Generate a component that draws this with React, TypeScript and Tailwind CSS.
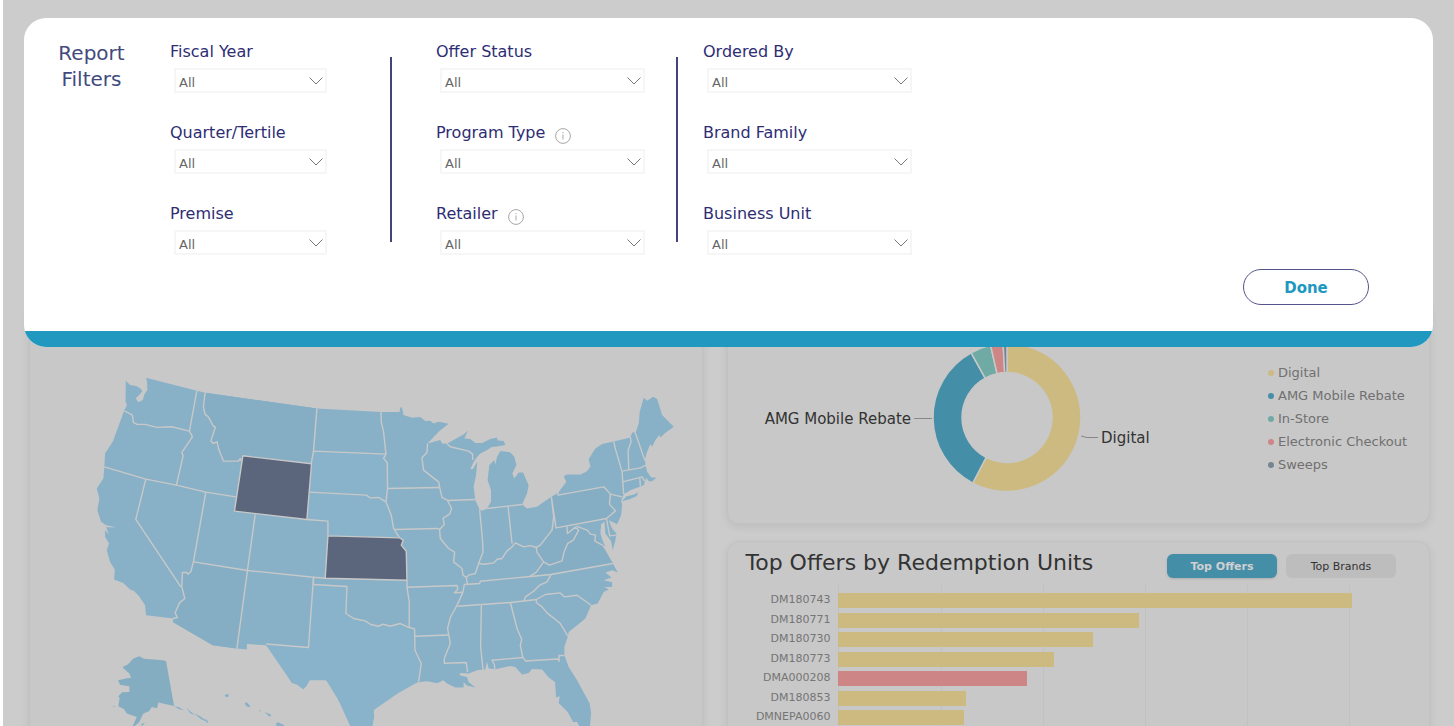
import { useState } from 'react';

type Filter = { id: string; label: string; info?: boolean };

const filterColumns: { filters: Filter[]; className: string }[] = [
  {
    className: 'w-[157px]',
    filters: [
      { id: 'fiscal-year', label: 'Fiscal Year' },
      { id: 'quarter', label: 'Quarter/Tertile' },
      { id: 'premise', label: 'Premise' },
    ],
  },
  {
    className: 'w-[209px]',
    filters: [
      { id: 'offer-status', label: 'Offer Status' },
      { id: 'program-type', label: 'Program Type', info: true },
      { id: 'retailer', label: 'Retailer', info: true },
    ],
  },
  {
    className: 'w-[209px]',
    filters: [
      { id: 'ordered-by', label: 'Ordered By' },
      { id: 'brand-family', label: 'Brand Family' },
      { id: 'business-unit', label: 'Business Unit' },
    ],
  },
];

const slices = [
  { name: 'Digital', color: '#cdba80', from: 0, to: 207.6 },
  { name: 'AMG Mobile Rebate', color: '#458ea8', from: 207.6, to: 331 },
  { name: 'In-Store', color: '#70aaa4', from: 331, to: 347.2 },
  { name: 'Electronic Checkout', color: '#cd8685', from: 347.2, to: 357 },
  { name: 'Sweeps', color: '#748591', from: 357, to: 360 },
];

// width is a percentage of the plot area
const offers = [
  { code: 'DM180743', width: 91.5, color: '#cdba80' },
  { code: 'DM180771', width: 53.6, color: '#cdba80' },
  { code: 'DM180730', width: 45.3, color: '#cdba80' },
  { code: 'DM180773', width: 38.3, color: '#cdba80' },
  { code: 'DMA000208', width: 33.5, color: '#cd8685' },
  { code: 'DM180853', width: 22.7, color: '#cdba80' },
  { code: 'DMNEPA0060', width: 22.3, color: '#cdba80' },
];

const gridLines = [0, 18.2, 36.4, 54.6, 72.8, 91];

const mainland =
  'M125.7 380.7L130 385L136 386L140 388.3L142.3 391L140 394L135.7 398.3L138.3 402.3L142.7 400L144.3 394.3L147.3 390L147 382L146 377.7L196.7 390.7L205 392.7L256.7 400L316.7 408.3L380.7 412L399.3 412L400 407.3L401.7 407.3L403.3 415L411.7 417.7L420 417L425 421L430 420.7L433.3 423.3L438.3 421.7L448.3 423.7L438.3 431.7L427.3 443.3L440 440L441.7 443.3L446.7 443.7L455 439L463.3 434.3L467.7 430.3L464 438.3L470 439L475 443L481.7 443L490 439L496.7 437.3L497.3 440.3L503.3 441L505 445L496.7 446.3L491.7 447L485 451L480 453.3L476.7 457L473.3 462L470 469L472.7 469L477 461.7L475.7 475L473.3 486.7L475 500L479.3 509.3L482.3 510.7L486.7 508.3L490.7 501.7L490.7 490L487.3 480L489 465L494 460L495 464.3L496.7 456.7L500 451L510 452.3L514 456.7L516 465L512 473.3L514 478.3L518.3 472.3L522.7 472.3L528.3 485L526.7 493.3L521.7 504.3L526.7 508.3L536.7 506.7L543 502L551 496.7L557.7 492.7L566 481.7L563.3 476.7L566 474.3L580 474.3L586 471.7L590 466.7L588.3 459L595 448.3L601.7 444L613.3 441.3L630 437.3L631.7 432.3L635.3 432.3L638.3 423.3L639.3 411.7L643.3 397.7L646.7 400.7L652.7 396.7L656.7 399L661.7 415L668.3 421.7L673.3 426.7L665 432.7L660 437.3L659 435L655 440L651.7 446.7L650 444L646.7 451.7L644.3 460L645.7 467.3L646.7 471.7L650.7 477.3L656 477.3L651.7 481L648.3 481L645.7 477.7L643.3 485L639.3 486.7L630 490L623.3 494L620.7 500.7L621.7 505L620.7 515L616.7 524L608.3 520L611.7 528.3L616 533.3L615 540L612.3 550L610.7 541L605 533.3L604 521.7L600.7 524L600 533.3L602.7 541.7L605 546.7L599 542.3L606 551.7L601 552L608.3 557L612.3 562.7L617.3 572.3L611.7 570L605 572.3L611 577.3L603.3 580L611.7 582L611.7 586.7L604 586.7L608.3 589.3L603.3 591.7L597.3 603.3L590.7 605L585 618.3L576.7 625L568.3 631.7L567.3 636.7L564 646.7L564 655L568.3 666.7L576.7 680L589.3 703.3L590.7 713.3L589.3 728L580 728L576.7 721.7L572.7 721.7L567.3 711.7L558.3 702.7L559.3 696L555.7 697.3L554.7 681.7L548.3 677.3L541.7 669.3L531.7 668.7L528.3 672.7L521.7 674.3L515 666.7L510 665.7L495 669L488.3 668.3L486.7 661.7L485 669L476.7 670L468.3 673.3L459.3 672.7L460 675.3L466.7 676.7L468.3 681.7L475 687.3L466.7 685.3L463.3 682L463.3 687.3L455 687.3L446.7 683.3L443 680L437 683L426.7 681L416.7 682.3L406.7 685L404.3 681.7L402 682L405 687.3L397.3 693.3L388.3 697.3L378.3 705L373.3 710L374 716L371.7 728L351 728L347.3 711L338.3 700L334 688.3L326 680L315 678.3L309.3 680L306.7 685L303.3 689L296.7 684.3L291.7 682.7L287.7 676.7L285.7 666L278.3 659.3L266 645L246.7 643.7L246.7 649.3L236.7 648.3L212.7 645L172.7 621.7L173.3 618.3L146 615L145 605L139 596L134 590.7L130 589.3L123.3 582.7L114 579.3L114.7 569.3L110 561.7L106.7 550L109 543.3L105 536.7L105 530L109 534L106 527L116 527L106 525L101 521.7L97.3 510L99.3 498.3L96.7 488.3L103.3 478.3L104.3 466.7L105 453.3L112.7 441.7L124.3 410L127 405L125.5 402Z';

const darkerStates = [
  // Montana
  'M205 392.7L256.7 400L316.7 408.5L311 463.7L242.7 455.7L241.7 461.7L238.3 461L223.3 461L217 441.7L210.7 441L215.3 428.3L205 414.3L203.3 406.7Z',
  // Arizona
  'M193.3 561.7L247.3 570.3L236.7 648.3L212.7 645L172.7 621.7L177.3 617.3L175 612.7L184.7 598.3L181.7 586.7L182.3 572.3L190.7 571.7Z',
  // Pennsylvania
  'M551 496.7L603.3 486.7L610 494L609 504L615 510.7L606 518.3L555.7 527.7Z',
  // Virginia and West Virginia
  'M555.7 527.7L566 526L578.3 528L595 535L606 551.7L612.3 563L530 576L543.3 561.7L536 550L551.7 530Z',
];

const lighterStates = [
  // South Dakota and Nebraska
  'M313.3 451L385.7 454L387.3 488.3L385.7 501.7L399.3 537.7L327.7 535.7L327.7 521L306.7 519.3Z',
  // Texas
  'M313.3 584.3L346.7 586.3L345.7 613.3L377.7 626L409 627.3L414.7 650L421 663.3L416.7 682.3L397.3 693.3L373.3 710L371.7 728L351 728L338.3 700L326 680L309.3 680L303.3 689L287.7 676.7L266 645L308.3 647.3Z',
];

const stateLines = [
  'M124.3 410.7L132.3 415L133.3 422.3L137 424.3L145 424.3L156.7 427.3L171.7 426.7L189.3 431',
  'M196.7 390.7L189.3 431L192.3 436.7L181.7 452.3L183 455.7L176.3 485',
  'M205 392.7L203.3 406.7L205 414.3L208.3 417L213.3 426L215.3 427L213 434L210.7 441L213.3 443.3L217 441.7L218.5 449L223.3 461L238.3 461L240 458.5L241.7 461.7',
  'M104.3 466.7L145.7 479L176.3 485L205.7 492L235.7 496.7',
  'M145.7 479L135.7 519.3L180.7 586.7',
  'M205.7 492L193.3 561.7L190.7 571.7L187.7 574L186.7 572.3L182.3 572.3L181.7 586.7L184.7 598.3L179.3 602.7L175 612.7L177.3 617.3L173 618.3',
  'M193.3 561.7L247.3 570.3L313.3 577L325 578',
  'M255 514.3L247.3 570.3L236.7 648.3',
  'M306.7 519.3L327.7 521L327.7 535.7',
  'M316.7 408.3L313.3 451L311 463.7M313.3 451L385.7 454M309 492L366 495L370 497.7L378.3 497.3L385.7 501.7',
  'M380.7 412L381 421.7L383.3 431.7L385.7 454L383.3 458.3L387 462.7L387.3 488.3L385.7 501.7L391 515L393.3 528.3L399.3 537.7',
  'M387.3 488.3L439.3 487.3M394.3 529.3L436.7 528.3L439.3 529.3',
  'M427.3 443.3L426.7 452.3L421.7 457.7L423.3 470L438.3 481.7L440 490L441.7 497.3L447.3 500.3L451.3 508.3L449.3 514L442.7 518.3L444 524.3L439.3 529.3L440 538.3L448.3 548.3L454.3 552L453.3 561.7L461.7 568.3L462.7 575L466 577.3L467 584',
  'M447.3 500.3L475 499.3M446.7 443.7L450 446.7L468.3 451L472.3 454L472.3 460',
  'M479.3 509.3L482.3 541.7L482.7 551.7L478.3 563.3L475 573.3L468.3 575L466 577.3',
  'M486.7 508.3L507.7 506L521.7 504.3M507.7 506L511.7 543.3',
  'M478.3 563.3L484 564L493.3 562.7L497 559L501.7 558.3L506.7 550.7L511.7 546.7L515 542.7L523.3 546.7L530 545.5L536 547.3L540 545L543.3 540.7L551.7 530L553.3 516.7L551 496.7L555.7 527.7L606 518.3L615 510.7L609 504L610 494L603.3 486.7L557.7 495L557.7 491',
  'M610 494L621.7 496.7M606 518.3L609.3 535.7L615.7 535',
  'M613.3 441.3L615 449L618.3 460L621.7 471.7L622.3 481.7L623.3 494',
  'M630 437L630.7 441.7L627.7 450L628.3 469.3M634.7 432.3L644.3 460M621.7 471L640 467.7L645.7 465M622.3 481.7L641.7 476.7L644 481M639.3 477.7L640 486',
  'M536 547.3L536.5 552L543.3 561.7L549 565L555 563L561.7 560.7L564 551L567.3 543.3L573 540L578.3 530L575 527L567 533.3L566.5 526M576 526L586.7 530L590 534L595 535L594.5 541L602 545',
  'M543.3 561.7L536 572L530 576',
  'M612.3 563.3L550.7 574.3L530 576.3L480 581L479.3 583.3L464 584.3L462.7 591.7L458.3 601.7L455 608.3L450 617.3L447.3 628.3L450 643.3L444 658.3L444 663L466 662.3L467.3 671.7',
  'M457.3 606L510 602.3L536.7 599.3M550.7 574.3L546.7 581.7L539.3 585L533.3 591L525 596.7L524 600',
  'M536 599.3L545 594.3L560 592.7L564 596.7L576.7 595L590.7 605M536 599.3L536 602.3L541.7 606.7L546.7 612.7L560 623.3L567.3 635.7',
  'M510 602.3L516.7 628.3L521.3 639L520 645L522.3 656.7L525 660.7L557.3 658.7L558.7 661L558.7 655.3L564 655.3M522.3 657.3L491.7 660L494.3 665L494.3 669',
  'M481 605.3L480.3 646.7L482.7 669.3',
  'M406.7 587L456.7 585.3L457.5 589L454 592.7L462.3 592',
  'M406.7 580L406.7 587L409 601.7L409 627.3L414.3 628.7L414.7 650L421 663.3L418.3 681.7M414.7 636L448.3 634.7',
  'M313.3 577L313.3 584.3L346.7 586.3L345.7 613.3L353.3 618.3L365 620.7L370 624L377.7 626L383 624L390 626L400 623.3L409 627.3',
  'M313.3 577L308.3 647.3L266 643.7',
];

const alaska =
  'M166 661L174 705.7L166 704L158.3 702.3L157 708L151.7 706.7L149 711L143.3 713.3L139 722L131.7 728L136.7 716.7L126.7 713.3L124 709L118.3 706L119.5 698L118.3 696L122 692L129.3 691.7L129.3 686L120 684.5L118 680L127 678L131 677.5L129 673L122.3 667L128 664L133.3 658.3L139.3 656L144 658.5L153.3 659.3L163 660Z';

const highlighted = [
  // Wyoming
  'M242.7 455.7L311.3 463.7L306.7 519.3L234.3 511Z',
  // Kansas
  'M327.7 535.7L399.3 537.7L403 540L401 545L406 551L406.7 580L325 578Z',
];

const arc = (from: number, to: number) => {
  const point = (angle: number, r: number) => {
    const a = ((angle - 90) * Math.PI) / 180;
    return `${262 + r * Math.cos(a)} ${81.5 + r * Math.sin(a)}`;
  };
  const large = to - from > 180 ? 1 : 0;
  return `M${point(from, 74)}A74 74 0 ${large} 1 ${point(to, 74)}L${point(to, 45)}A45 45 0 ${large} 0 ${point(from, 45)}Z`;
};

const InfoIcon = () => (
  <svg viewBox="0 0 16 16" className="mt-2 size-4" fill="none" stroke="#a6a6a6" aria-hidden="true">
    <circle cx="8" cy="8" r="7.4" />
    <path d="M8 6.5v5M8 4v1.2" />
  </svg>
);

const FilterField = ({ id, label, info }: Filter) => (
  <div>
    <div className="flex h-[21px] items-center gap-2.5">
      <label htmlFor={id} className="pt-0.5 text-base leading-[21px] whitespace-nowrap text-[#2e2d74]">
        {label}
      </label>
      {info && <InfoIcon />}
    </div>
    <div className="relative mt-[7px] ml-1">
      <select
        id={id}
        className="block h-[25px] w-full appearance-none border-2 border-[#f6f6f6] bg-white pt-1 pl-[3px] text-[13px] leading-[17px] text-[#666]"
      >
        <option>All</option>
      </select>
      <svg
        viewBox="0 0 14 8"
        className="pointer-events-none absolute top-[9px] right-1 h-2 w-3.5"
        fill="none"
        stroke="#777"
        aria-hidden="true"
      >
        <path d="M.5 .5L7 7L13.5 .5" />
      </svg>
    </div>
  </div>
);

const ReportFilters = ({ onDone }: { onDone: () => void }) => (
  <section className="absolute inset-x-[21px] top-[18px] overflow-hidden rounded-[22px] bg-white">
    <div className="flex pt-[22px] pl-[30px]">
      <h1 className="w-[75px] text-center text-xl leading-[26px] text-[#424a7d]">Report Filters</h1>
      <div className="ml-[41px] flex">
        {filterColumns.map((column, i) => (
          <div key={i} className="flex">
            {i > 0 && (
              <div className={i === 1 ? 'mt-[17px] mr-11 ml-[63px] h-[185px] w-0.5 bg-[#42437f]' : 'mt-[17px] mr-[25px] ml-[31px] h-[185px] w-0.5 bg-[#42437f]'} />
            )}
            <div className={`flex flex-col gap-7 ${column.className}`}>
              {column.filters.map((filter) => (
                <FilterField key={filter.id} {...filter} />
              ))}
            </div>
          </div>
        ))}
      </div>
    </div>
    <div className="flex justify-end pt-[14px] pr-16 pb-[26px]">
      <button
        onClick={onDone}
        className="h-9 w-[126px] rounded-full border border-[#54548c] pt-0.5 text-[15px] font-bold text-[#2098c0]"
      >
        Done
      </button>
    </div>
    <div className="h-4 bg-[#2098c0]" />
  </section>
);

const UsMap = () => (
  <svg viewBox="30 301 672 440" className="w-full" role="img" aria-label="Redemptions by state">
    <g fill="#88b1c8">
      <path d={mainland} />
      <path d="M621.5 501L626 496L633 494.5L638 492L636 496L629 499Z" />
      <path d={alaska} fill="#85adc2" />
      <path d="M224.5 695l2-1.200l2.500 1l-1 2h-2.500zM244.500 703l2-1l3 3l.5 2l-4-1zM258 710l3 .5l-1 1zM264 712l4 1l3.500 2l-2.500 1.500l-2-2.500zM276 723l2-1l6 3l-2 3h-6z" />
      <path d="M174 706l5 1l5 3l-5-1zM186 707l4 4l5 4l-5-2zM194 713l6 3l8 6l-7-3zM204 718l4 3l-1 2zM113 706l2-.5l-1 1.500zM141 724l4-2l-3 4z" />
      {darkerStates.map((d) => (
        <path key={d} d={d} fill="#85adc3" />
      ))}
      {lighterStates.map((d) => (
        <path key={d} d={d} fill="#88b3ca" />
      ))}
    </g>
    <g stroke="#c8c8c8" strokeWidth="1.4" strokeLinejoin="round">
      {stateLines.map((d) => (
        <path key={d} d={d} fill="none" />
      ))}
      {highlighted.map((d) => (
        <path key={d} d={d} fill="#5b667d" />
      ))}
    </g>
  </svg>
);

const OfferTypes = () => (
  <div className="flex justify-between rounded-xl border border-[#c2c2c2] bg-[#c8c8c8] pt-[35px] pr-5 pb-6 pl-[17px] shadow-[0_3px_8px_rgba(0,0,0,0.08)]">
    <svg viewBox="0 0 430 163" className="h-[163px] w-[430px]" role="img" aria-label="Redemptions by offer type">
      <g stroke="#c8c8c8" strokeWidth="1.5">
        {slices.map((s) => (
          <path key={s.name} d={arc(s.from, s.to)} fill={s.color} />
        ))}
      </g>
      <path d="M169 82.500h18M336 100l6 1.500h11" fill="none" stroke="#888" />
      <g fill="#333" fontSize="15">
        <text x="166" y="88" textAnchor="end">AMG Mobile Rebate</text>
        <text x="356" y="107">Digital</text>
      </g>
    </svg>
    <ul className="mt-[25px] w-[141px] text-[13px] leading-[23px] whitespace-nowrap text-[#707070]">
      {slices.map((s) => (
        <li key={s.name} className="flex items-center gap-1">
          <span className="size-1.5 shrink-0 rounded-full" style={{ backgroundColor: s.color }} />
          {s.name}
        </li>
      ))}
    </ul>
  </div>
);

const TopOffers = () => {
  const [tab, setTab] = useState('offers');
  const active = 'bg-[#458ea8] font-bold text-[#d0d0d0] shadow-sm';
  const inactive = 'bg-[#bdbdbd] text-[#333]';

  return (
    <div className="rounded-xl border border-[#c2c2c2] bg-[#c8c8c8] pb-20 shadow-[0_3px_8px_rgba(0,0,0,0.08)]">
      <div className="flex items-start justify-between pt-[7px] pr-[33px] pl-[17px]">
        <h2 className="text-[22px] leading-7 whitespace-nowrap text-[#333]">Top Offers by Redemption Units</h2>
        <div className="mt-[5px] flex gap-[9px] text-[11px]">
          <button onClick={() => setTab('offers')} className={`h-6 w-[110px] rounded-md pt-0.5 ${tab === 'offers' ? active : inactive}`}>
            Top Offers
          </button>
          <button onClick={() => setTab('brands')} className={`h-6 w-[110px] rounded-md pt-0.5 ${tab === 'brands' ? active : inactive}`}>
            Top Brands
          </button>
        </div>
      </div>
      <div className="relative mt-[7px] mr-[29px] ml-[110px] pt-2">
        {gridLines.map((x) => (
          <div key={x} className="absolute top-0 h-80 w-px bg-[#c1c1c1]" style={{ left: `${x}%` }} />
        ))}
        <ul className="relative flex h-[132px] flex-col justify-between">
          {offers.map((offer) => (
            <li key={offer.code} className="flex h-[15px] items-center">
              <span className="-ml-[90px] w-[82px] shrink-0 text-right text-[11px] text-[#757575]">{offer.code}</span>
              <div className="ml-2 h-full grow">
                <div className="h-full" style={{ width: `${offer.width}%`, backgroundColor: offer.color }} />
              </div>
            </li>
          ))}
        </ul>
      </div>
    </div>
  );
};

export default function App() {
  const [open, setOpen] = useState(true);

  return (
    <main className="relative h-screen overflow-hidden border-l-[3px] border-white bg-[#ccc] font-['DejaVu_Sans',Verdana,sans-serif]">
      <div className="grid grid-cols-[674fr_702fr] gap-6 pt-[300px] pr-6 pl-[26px]">
        <div className="rounded-xl border border-[#c2c2c2] bg-[#c8c8c8] shadow-[0_3px_8px_rgba(0,0,0,0.08)]">
          <UsMap />
        </div>
        <div className="flex min-w-0 flex-col gap-[17px]">
          <OfferTypes />
          <TopOffers />
        </div>
      </div>
      {open && <ReportFilters onDone={() => setOpen(false)} />}
    </main>
  );
}
